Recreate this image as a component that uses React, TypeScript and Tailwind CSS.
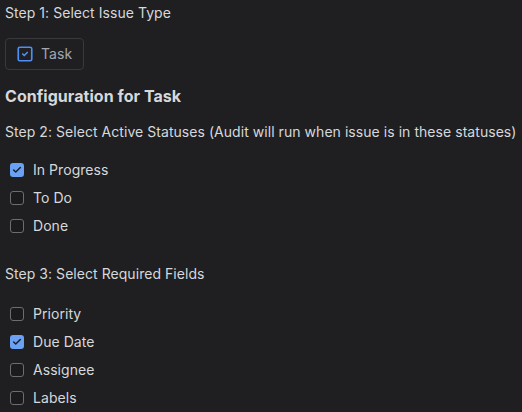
import { SquareCheck, Check } from 'lucide-react';

const statuses = [
  { label: 'In Progress', checked: true },
  { label: 'To Do', checked: false },
  { label: 'Done', checked: false },
];

const fields = [
  { label: 'Priority', checked: false },
  { label: 'Due Date', checked: true },
  { label: 'Assignee', checked: false },
  { label: 'Labels', checked: false },
];

function CheckRow({ label, checked }: { label: string; checked: boolean }) {
  return (
    <label className="flex h-[28px] items-center gap-[9px] pl-[5px]">
      <span
        className={
          checked
            ? 'flex size-[14px] items-center justify-center rounded-[3px] bg-[#6aa1f4]'
            : 'flex size-[14px] items-center justify-center rounded-[3px] border border-[#6b6d72] bg-[#1b1b1d]'
        }
      >
        {checked ? <Check className="size-[10px] text-[#1e1e20]" strokeWidth={3.5} /> : null}
      </span>
      <span>{label}</span>
    </label>
  );
}

export default function App() {
  return (
    <div
      className="min-h-screen bg-[#1f1f21] px-[5px] pt-[3px] text-[14px] leading-[20px] tracking-[0.05px] text-[#d6d8dc]"
      style={{ fontFamily: 'Inter, "Noto Sans", sans-serif' }}
    >
      <p>Step 1: Select Issue Type</p>

      <button className="mt-[15px] flex h-[32px] items-center gap-[7px] rounded-[4px] border border-[#38393d] pr-[11px] pl-[10px] text-[#a3a7ae]">
        <SquareCheck className="size-[18px] text-[#4f8ef5]" strokeWidth={2.2} />
        <span>Task</span>
      </button>

      <h3 className="mt-[14px] text-[16px] font-bold leading-[24px] text-[#d6d8dc]">
        Configuration for Task
      </h3>

      <p className="mt-[14px]">
        Step 2: Select Active Statuses (Audit will run when issue is in these statuses)
      </p>
      <div className="mt-[14px] flex flex-col">
        {statuses.map((s) => (
          <CheckRow key={s.label} label={s.label} checked={s.checked} />
        ))}
      </div>

      <p className="mt-[24px]">Step 3: Select Required Fields</p>
      <div className="mt-[16px] flex flex-col">
        {fields.map((f) => (
          <CheckRow key={f.label} label={f.label} checked={f.checked} />
        ))}
      </div>
    </div>
  );
}
